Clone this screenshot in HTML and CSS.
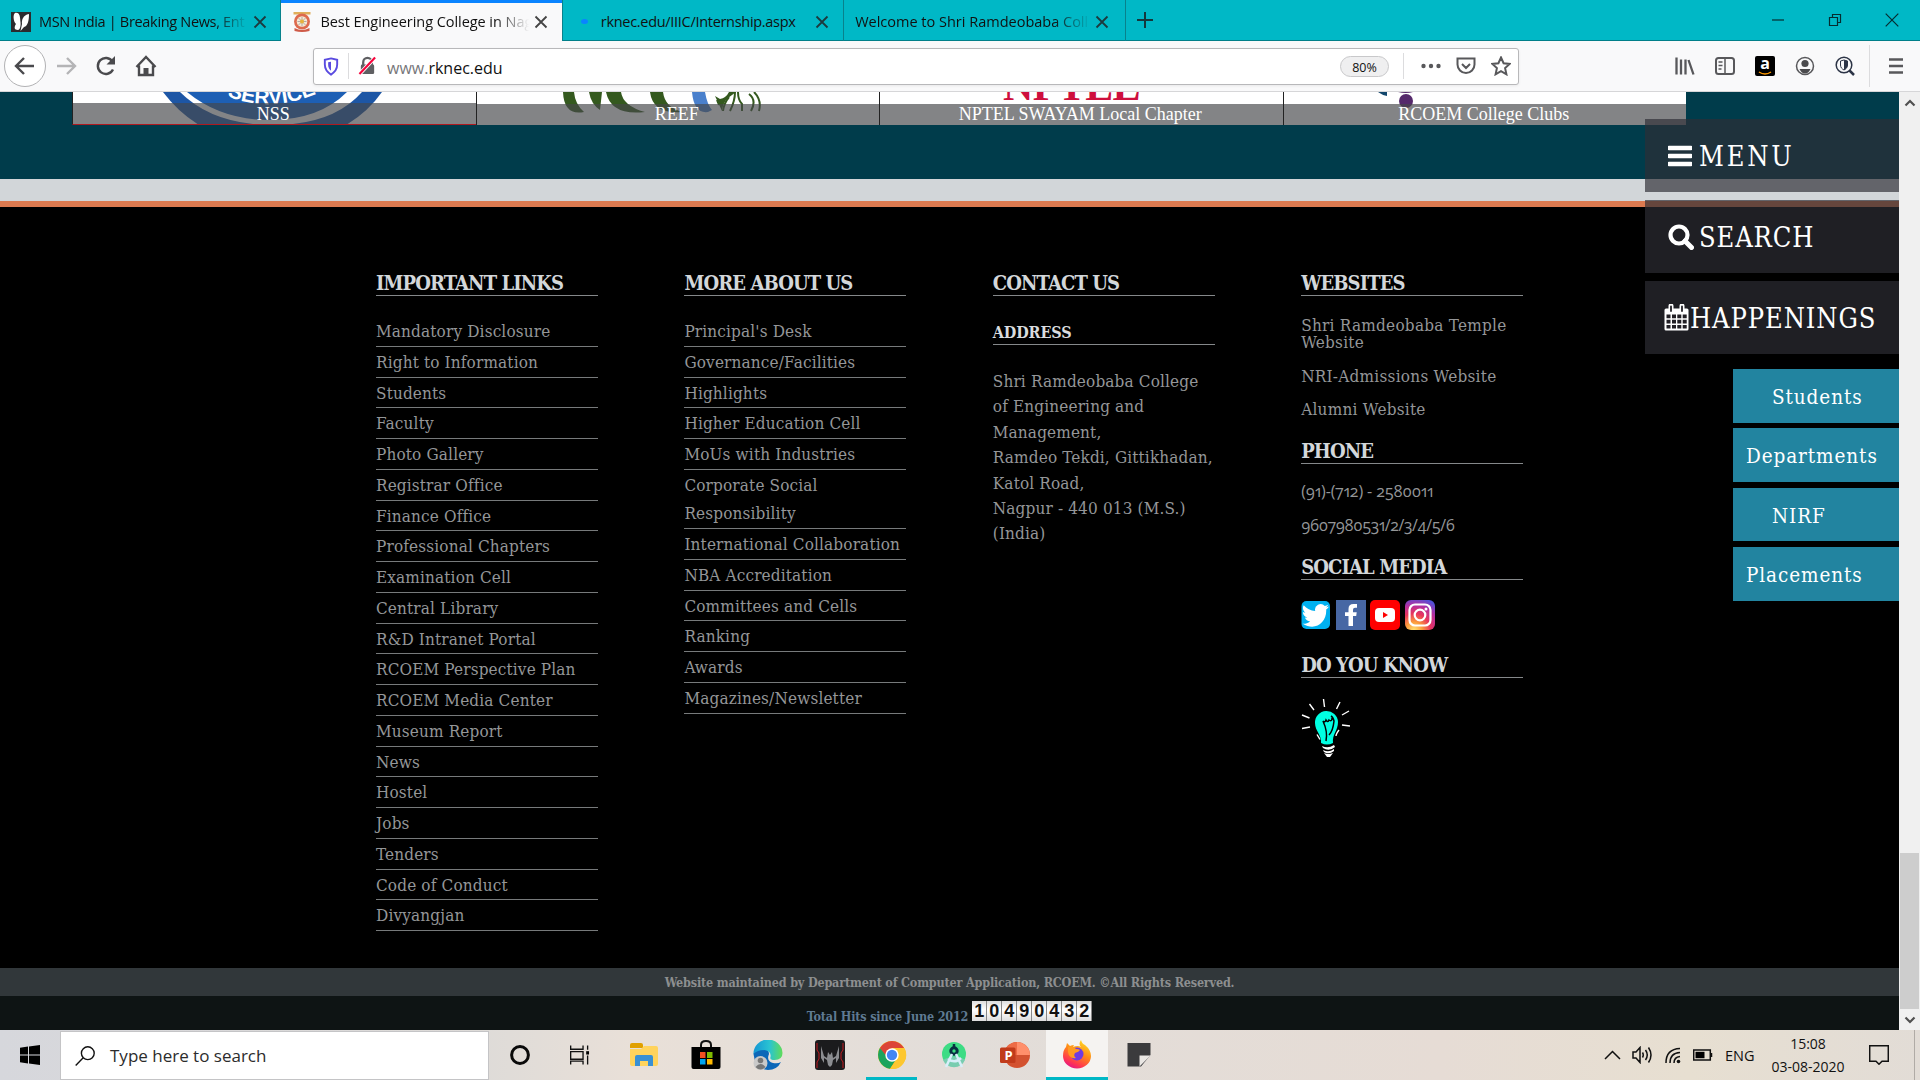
FILE: index.html
```html
<!DOCTYPE html>
<html lang="en">
<head>
<meta charset="utf-8">
<title>Best Engineering College in Nagpur</title>
<link rel="stylesheet" href="styles.css">
</head>
<body>
<div class="screen">
  <header class="tabs">
    <div class="tab">
      <svg class="fav" viewBox="0 0 20 20"><rect width="20" height="20" fill="#2b2b2e"/><path d="M4 1C9 0 9 5 9.500 10 10 14 9 18 7 18 3 18 3 15 5 12 2 9 2 2 4 1Z M18 2C12 3 10.500 8 11 12L9.500 19 13 15C17 14 18 8 18 2Z" fill="#fff"/></svg>
      <span class="tab-text fade t1">MSN India | Breaking News, Ent</span>
      <svg class="x" viewBox="0 0 14 14"><path d="M1.500 1.500l11 11M12.500 1.500l-11 11"/></svg>
    </div>
    <div class="tab active">
      <svg class="fav" viewBox="0 0 20 20"><rect x="1.500" width="17" height="2.500" fill="#e0ae5a"/><circle cx="10" cy="9.500" r="8" fill="#dd6a4e"/><circle cx="10" cy="9.500" r="5.300" fill="#f6e8d2"/><path d="M10 5v9M5.500 9.500h9M6.500 6l7 7M13.500 6l-7 7" stroke="#a9a2a4" stroke-width=".9"/><circle cx="10" cy="9.500" r="2" fill="#e8b23c"/><path d="M2.500 16q7.500 4 15 0v3q-7.500 2-15 0z" fill="#cf5b48"/></svg>
      <span class="tab-text fade t2">Best Engineering College in Nag</span>
      <svg class="x" viewBox="0 0 14 14"><path d="M1.500 1.500l11 11M12.500 1.500l-11 11"/></svg>
    </div>
    <div class="tab">
      <span class="dot"></span>
      <span class="tab-text t3">rknec.edu/IIIC/Internship.aspx</span>
      <svg class="x" viewBox="0 0 14 14"><path d="M1.500 1.500l11 11M12.500 1.500l-11 11"/></svg>
    </div>
    <div class="tab last">
      <span class="tab-text fade t4">Welcome to Shri Ramdeobaba Coll</span>
      <svg class="x" viewBox="0 0 14 14"><path d="M1.500 1.500l11 11M12.500 1.500l-11 11"/></svg>
    </div>
    <svg class="plus" viewBox="0 0 18 18"><path d="M9 1v16M1 9h16"/></svg>
    <div class="winbtns">
      <svg viewBox="0 0 14 14"><path d="M1 7h12"/></svg>
      <svg viewBox="0 0 14 14"><path d="M1.500 4.500h8v8h-8zM4.500 4.500v-3h8v8h-3"/></svg>
      <svg viewBox="0 0 14 14"><path d="M.7 .7l12.600 12.600M13.300 .7L.7 13.300"/></svg>
    </div>
  </header>

  <div class="toolbar">
    <span class="back"><svg class="nav" viewBox="0 0 22 22"><path d="M20 11H2.500M10 3l-8 8 8 8"/></svg></span>
    <svg class="nav dim" viewBox="0 0 22 22"><path d="M2 11h17.500M12 3l8 8-8 8"/></svg>
    <svg class="nav" viewBox="0 0 22 22"><path d="M18 14.500A8 8 0 1 1 17.500 6.500"/><path d="M20 1v8.500h-8.500z" fill="#4a4a4d" stroke="none"/></svg>
    <svg class="nav" viewBox="0 0 22 22"><path d="M1.500 12L11 2l9.500 10M4 10.500V20h14v-9.500"/><path d="M8.500 20v-7h5v7z" fill="#4a4a4d" stroke="none"/></svg>
    <div class="urlbar">
      <svg class="shield" viewBox="0 0 16 20"><path d="M8 1.500L14.500 3v5c0 5-2.500 8-6.500 10.500C4 16 1.500 13 1.500 8V3z" fill="none" stroke="#5a4be0" stroke-width="2"/><path d="M8 5v9.500C6 13 5 11 5 8V5.500z" fill="#5a4be0"/></svg>
      <i class="sep"></i>
      <svg class="lock" viewBox="0 0 20 20"><path d="M5.500 9V6a4.500 4.500 0 0 1 9 0v3" fill="none" stroke="#5f5f62" stroke-width="2.400"/><rect x="3" y="8.500" width="14" height="10" rx="1.500" fill="#5f5f62"/><path d="M1.500 18.500L18 1" stroke="#fff" stroke-width="4"/><path d="M1.500 18.500L18 1" stroke="#f7043c" stroke-width="2.200"/></svg>
      <span class="url"><em>www.</em>rknec.edu</span>
      <span class="zoom">80%</span>
      <i class="sep s2"></i>
      <svg class="ic dots" viewBox="0 0 20 20"><circle cx="2.500" cy="10" r="2.200"/><circle cx="10" cy="10" r="2.200"/><circle cx="17.500" cy="10" r="2.200"/></svg>
      <svg class="ic" viewBox="0 0 20 20"><path d="M1.500 2.500h17v6a8.500 8.500 0 0 1-17 0zM6 8l4 4 4-4"/></svg>
      <svg class="ic" viewBox="0 0 20 20"><path d="M10 1.500l2.600 5.700 6 .7-4.500 4.200 1.300 6.200L10 15.200l-5.400 3.100 1.300-6.200L1.400 7.900l6-.7z"/></svg>
    </div>
    <div class="tools">
      <svg class="ic" viewBox="0 0 20 20"><path d="M1.500 1.500v17M6 3.500v15M10.500 3.500v15M13.500 4l5 14.500" stroke-width="2.300"/></svg>
      <svg class="ic" viewBox="0 0 20 20"><rect x="1" y="2" width="18" height="16" rx="2.500"/><path d="M10 2v16M3.500 6h4M3.500 9.500h4M3.500 13h3" stroke-width="1.500"/></svg>
      <span class="amz">a<svg viewBox="0 0 14 4"><path d="M1 1q6 4 12 0" fill="none" stroke="#f90" stroke-width="1.500"/></svg></span>
      <svg class="ic" viewBox="0 0 20 20"><circle cx="10" cy="10" r="8.500" stroke-width="1.500"/><circle cx="10" cy="7.500" r="3.600" fill="#4a4a4d" stroke="none"/><path d="M4.500 13h11q-2 4.500-5.500 4.500T4.500 13z" fill="#4a4a4d" stroke="none"/></svg>
      <svg class="ic" viewBox="0 0 20 20"><circle cx="9" cy="9" r="7.800" stroke="#2c3446" stroke-width="1.500"/><path d="M5.500 5L9 4l3.500 1v4c0 2.500-1.500 4-3.500 5-2-1-3.500-2.500-3.500-5z" stroke="#2c3446" stroke-width="1"/><path d="M9 4v10c2-1 3.500-2.500 3.500-5V5z" fill="#2c3446" stroke="none"/><path d="M14.500 14.500l4.500 4.500" stroke="#2c3446" stroke-width="2.500"/></svg>
    </div>
    <i class="sep s3"></i>
    <svg class="ic burger" viewBox="0 0 16 20"><path d="M1 3.500h14M1 10h14M1 16.500h14"/></svg>
  </div>

  <div class="view">
    <main class="page">
      <section class="strip">
        <div class="card first">
          <svg class="pic" viewBox="0 0 403 33"><path d="M90 0h219Q295 20 273 33H126Q105 20 90 0z" fill="#1d56a5"/><path d="M107 0h182Q260 33 200 33T107 0z" fill="#fff"/><path d="M114 0h160Q246 28 197 28T114 0z" fill="#1d5fb4"/><path id="arc" d="M154 4Q203 24 258 -5" fill="none"/><text class="seal"><textPath href="#arc">SERVICE</textPath></text></svg>
          <span class="cap">NSS</span>
        </div>
        <div class="card">
          <svg class="pic" viewBox="0 0 403 33"><path d="M86 0h11q1 12 10 20-20 4-21-20zM112 0h13l-2 18Q114 12 112 0zM129 0h15q2 14 24 20-34 4-39-20zM173 0h13q2 16 20 20-30 3-33-20z" fill="#34591e"/><path d="M215 0h13q2 12 7 18l-4 2q-14 2-16-20z" fill="#4a80cc"/><path d="M238 4l5 3q6-1 9-7h7l-8 6q-5 4-6 13" fill="#34591e"/><path d="M240 8l2 5M252 5q-5 6-6 14M258 0q0 9-5 19M261 0q0 8 4 12v7M272 2q8 6 2 17M277 0q8 8 5 19" fill="none" stroke="#34591e" stroke-width="2"/></svg>
          <span class="cap">REEF</span>
        </div>
        <div class="card">
          <span class="nptel">NPTEL</span>
          <span class="cap">NPTEL SWAYAM Local Chapter</span>
        </div>
        <div class="card">
          <svg class="pic" viewBox="0 0 403 33"><path d="M94 0h9v4q-5-1-9-4z" fill="#12466c"/><path d="M114 0h15q-7 2-15 0z" fill="#55296b"/><ellipse cx="122" cy="9" rx="7" ry="7" fill="#55296b"/></svg>
          <span class="cap">RCOEM College Clubs</span>
        </div>
      </section>
      <div class="greybar"></div>

      <footer class="footer">
        <section class="col">
          <h3>IMPORTANT LINKS</h3>
          <ul class="links">
            <li>Mandatory Disclosure</li><li>Right to Information</li><li>Students</li><li>Faculty</li><li>Photo Gallery</li><li>Registrar Office</li><li>Finance Office</li><li>Professional Chapters</li><li>Examination Cell</li><li>Central Library</li><li>R&amp;D Intranet Portal</li><li>RCOEM Perspective Plan</li><li>RCOEM Media Center</li><li>Museum Report</li><li>News</li><li>Hostel</li><li>Jobs</li><li>Tenders</li><li>Code of Conduct</li><li>Divyangjan</li>
          </ul>
        </section>
        <section class="col">
          <h3>MORE ABOUT US</h3>
          <ul class="links">
            <li>Principal's Desk</li><li>Governance/Facilities</li><li>Highlights</li><li>Higher Education Cell</li><li>MoUs with Industries</li><li>Corporate Social<br>Responsibility</li><li>International Collaboration</li><li>NBA Accreditation</li><li>Committees and Cells</li><li>Ranking</li><li>Awards</li><li>Magazines/Newsletter</li>
          </ul>
        </section>
        <section class="col">
          <h3>CONTACT US</h3>
          <h4>ADDRESS</h4>
          <p class="address">Shri Ramdeobaba College<br>of Engineering and<br>Management,<br>Ramdeo Tekdi, Gittikhadan,<br>Katol Road,<br>Nagpur - 440 013 (M.S.)<br>(India)</p>
        </section>
        <section class="col">
          <h3>WEBSITES</h3>
          <div class="sites"><p>Shri Ramdeobaba Temple<br>Website</p><p>NRI-Admissions Website</p><p>Alumni Website</p></div>
          <h3>PHONE</h3>
          <div class="phones"><p class="p1">(91)-(712) - 2580011</p><p class="p2">9607980531/2/3/4/5/6</p></div>
          <h3>SOCIAL MEDIA</h3>
          <div class="social">
            <svg viewBox="0 0 30 30"><rect x=".5" y="1" width="28.500" height="28" rx="5" fill="#00b1f0"/><path d="M28 6.500c-1 .5-2 .8-3 .9 1-.7 1.800-1.600 2.200-2.700-1 .6-2.200 1-3.400 1.200a5.600 5.600 0 0 0-9.600 5.100C9.600 10.800 5.500 8.600 2.700 5.300c-1.500 2.500-.7 5.700 1.700 7.300-.9 0-1.800-.2-2.500-.6 0 2.600 1.800 5 4.500 5.500-.8.200-1.700.2-2.500.1.700 2.200 2.800 3.700 5.200 3.800-2.300 1.800-5.200 2.600-7.500 2.300C14 31.500 26 23 25.200 9.600c1.100-.8 2-1.900 2.800-3.100z" fill="#fff"/></svg>
            <svg viewBox="0 0 30 30"><rect width="30" height="30" fill="#4767a4"/><path d="M12.500 26V16H9v-3.800h3.500V9q0-5 5-5H21v3.800h-2q-2 0-2 2v2.400h3.700L20.200 16H17v10z" fill="#fff"/></svg>
            <svg viewBox="0 0 30 30"><rect width="30" height="30" rx="5" fill="#f00"/><rect x="5" y="8" width="20" height="14" rx="4" fill="#fff"/><path d="M13 12v6l5-3z" fill="#f00"/></svg>
            <svg viewBox="0 0 30 30"><defs><radialGradient id="ig" cx=".3" cy="1" r="1.100"><stop offset="0" stop-color="#ffe070"/><stop offset=".25" stop-color="#fb9a3c"/><stop offset=".5" stop-color="#e8345c"/><stop offset=".75" stop-color="#b52fa0"/><stop offset="1" stop-color="#5151d8"/></radialGradient></defs><rect width="30" height="30" rx="6" fill="url(#ig)"/><g fill="none" stroke="#fff" stroke-width="2.200"><rect x="4.500" y="4.500" width="21" height="21" rx="5.500"/><circle cx="15" cy="15" r="5.300"/></g><circle cx="21" cy="9" r="1.500" fill="#fff"/></svg>
          </div>
          <h3 class="know">DO YOU KNOW</h3>
          <svg class="bulb" viewBox="0 0 50 60"><g stroke="#fff" stroke-width="1.400" fill="none"><path d="M22.500 1l1 8M39 4l-3.500 7M8.500 6l4.500 6M1 17l7.500 3M48 13l-7 4M1 30.500l8-1.500M49 28l-8-1M16 36.500l3 5M38 32q-3 4-3 6"/></g><path d="M20 45c1-8-6-12-6-20a11 11 0 0 1 23-1c0 9-6 12-5 21q-6 3-12 0z" fill="#00ffe2"/><path d="M25 43q2-9-3-20 2 2 3-1 2 3 3 0 3 2 3-2M28 37q4-4 5-14-1-4-3-5" fill="none" stroke="#000" stroke-width="1.500"/><path d="M21 48q6 3 12-1l1 2q-6 5-12 1zM22 52q6 3 11-1v2q-5 4-10 1zM23 55q4 2 9 0l-3 4h-3z" fill="#fff"/></svg>
        </section>
      </footer>
      <div class="credit"><span>Website maintained by Department of Computer Application, RCOEM. ©All Rights Reserved.</span></div>
      <div class="hits"><span>Total Hits since June 2012</span><div class="counter"><b>1</b><b>0</b><b>4</b><b>9</b><b>0</b><b>4</b><b>3</b><b>2</b></div></div>

      <aside class="side">
        <div class="big menu"><svg viewBox="0 0 24 24"><path d="M1 4h22M1 12h22M1 20h22" stroke="#fff" stroke-width="4.500" stroke-linecap="round"/></svg><span>MENU</span></div>
        <div class="big search"><svg viewBox="0 0 26 26"><circle cx="11" cy="11" r="8.500" fill="none" stroke="#fff" stroke-width="4.200"/><path d="M17 17l6.500 6.500" stroke="#fff" stroke-width="5" stroke-linecap="round"/></svg><span>SEARCH</span></div>
        <div class="big happ"><svg viewBox="0 0 25 27"><path d="M2 4.500h21a1.500 1.500 0 0 1 1.500 1.500v19a1.500 1.500 0 0 1-1.500 1.500H2A1.500 1.500 0 0 1 .5 25V6A1.500 1.500 0 0 1 2 4.500z" fill="#fff"/><path d="M2.500 10.500h4v3.800h-4zM8 10.500h4v3.800H8zM13.300 10.500h4v3.800h-4zM18.700 10.500h4v3.800h-4zM2.500 15.700h4v3.800h-4zM8 15.700h4v3.800H8zM13.300 15.700h4v3.800h-4zM18.700 15.700h4v3.800h-4zM2.500 21h4v3.500h-4zM8 21h4v3.500H8zM13.300 21h4v3.500h-4zM18.700 21h4v3.500h-4z" fill="#211f25"/><path d="M7 2v5M18 2v5" stroke="#fff" stroke-width="5" stroke-linecap="round"/><path d="M7 2.500v4.500M18 2.500v4.500" stroke="#211f25" stroke-width="1.800" stroke-linecap="round"/></svg><span>HAPPENINGS</span></div>
        <div class="quick">
          <a class="in">Students</a><a>Departments</a><a class="in">NIRF</a><a>Placements</a>
        </div>
      </aside>
    </main>
    <div class="scroll">
      <svg viewBox="0 0 12 8"><path d="M1.500 6.500L6 2l4.500 4.500"/></svg>
      <div class="thumb"></div>
      <svg viewBox="0 0 12 8"><path d="M1.500 1.500L6 6l4.500-4.500"/></svg>
    </div>
  </div>

  <div class="taskbar">
    <div class="start"><svg viewBox="0 0 20 20"><path d="M0 2.800L8 1.600V9.500H0zM9 1.500L20 0v9.500H9zM0 10.500h8v7.900l-8-1.200zM9 10.500h11V20L9 18.500z"/></svg></div>
    <div class="find"><svg viewBox="0 0 20 20"><circle cx="12.800" cy="7.200" r="6.400"/><path d="M8.200 11.800L.7 19.500"/></svg><span>Type here to search</span></div>
    <div class="apps">
      <div class="app"><svg viewBox="0 0 20 20" class="s20"><circle cx="10" cy="10" r="8.400" fill="none" stroke="#0a0a0a" stroke-width="3"/></svg></div>
      <div class="app tv"><svg viewBox="0 0 21 20" class="s20"><path d="M.7 0v4h13V0M.7 6.500h13v8H.7zM.7 20v-3.500h13V20M18.500 0v4.500M18.500 10.500V20" fill="none" stroke="#111" stroke-width="1.400"/><path d="M17 6h3v3.500h-3z"/></svg></div>
      <div class="app"><svg viewBox="0 0 30 30"><path d="M1 5q0-2 2-2h9q2 0 2 2v3H1z" fill="#e0a000"/><path d="M1 9h11l3-3h12q2 0 2 2v16q0 2-2 2H3q-2 0-2-2z" fill="#ffd35c"/><path d="M6 26V17q0-2 2-2h14q2 0 2 2v9h-5v-5h-8v5z" fill="#3990d4"/></svg></div>
      <div class="app"><svg viewBox="0 0 30 30"><path d="M10 9V5q0-4 5-4t5 4v4" fill="none" stroke="#111" stroke-width="2"/><path d="M.5 7h29v20q0 2-2 2h-25q-2 0-2-2z" fill="#000"/><path d="M9 12h5.500v6H9z" fill="#f25022"/><path d="M16 12h5.500v6H16z" fill="#7fba00"/><path d="M9 19h5.500v5.500H9z" fill="#00a4ef"/><path d="M16 19h5.500v5.500H16z" fill="#ffb900"/></svg></div>
      <div class="app"><svg viewBox="0 0 30 30"><defs><linearGradient id="ed"><stop offset="0" stop-color="#1596d4"/><stop offset=".55" stop-color="#29c3d2"/><stop offset="1" stop-color="#60dc58"/></linearGradient></defs><path d="M.5 14Q2 7 10 8q6 1 6 6-3 7 4 9 5 1 8-1-4 8-13 8Q2 29 .5 14z" fill="#0c67b8"/><path d="M.5 14A14.500 14 0 0 1 29.500 13q0 7-8 7-5 0-4-3 1-6-6-7-7 0-11 4z" fill="url(#ed)"/><circle cx="7.500" cy="23" r="7" fill="#c9c9c9"/><circle cx="7.500" cy="20.500" r="2.800" fill="#777"/><path d="M2.500 27q5-6 10 0-5 5-10 0z" fill="#777"/></svg></div>
      <div class="app"><svg viewBox="0 0 30 30"><rect width="30" height="30" rx="3" fill="#1b1b1d"/><path d="M2 3v7l2 3v6l-2 3v6M28 3v7l-2 3v6l2 3v6" stroke="#c21b20" fill="none"/><path d="M6 6l3 10 3 2 1-6 2 3 2-3 1 6 3-2 3-10v12l-3 5v-5l-3 2-1 5-2 2-2-2-1-5-3-2v5l-3-5z" fill="#8b8d91"/></svg></div>
      <div class="app run"><svg viewBox="0 0 30 30"><circle cx="15" cy="15" r="14" fill="#fbc116"/><path d="M2.900 8A14 14 0 0 1 27.100 8H15L9 18z" fill="#dc4437"/><path d="M2.900 8A14 14 0 0 0 13 28.800L20 18h-9z" fill="#1ca45c"/><path d="M15 8h12.200A14 14 0 0 1 13 28.900L21 17z" fill="#fdc72f"/><circle cx="15" cy="15" r="6.700" fill="#fff"/><circle cx="15" cy="15" r="5.200" fill="#4285f4"/></svg></div>
      <div class="app"><svg viewBox="0 0 30 30"><circle cx="15" cy="14" r="12" fill="#3ddc84"/><path d="M4 20a12 12 0 0 0 22 0q-10-7-22 0z" fill="#78cdb0"/><circle cx="15" cy="11" r="3.200" fill="none" stroke="#073042" stroke-width="3"/><path d="M15 4v4" stroke="#073042" stroke-width="2.500"/><path d="M13 14L7 27M17 14l6 13M9 19q7 5 13-1" stroke="#d7eff9" stroke-width="2.500" fill="none"/></svg></div>
      <div class="app"><svg viewBox="0 0 30 30"><circle cx="17" cy="15" r="13" fill="#d35230"/><path d="M17 2a13 13 0 0 1 13 13H17z" fill="#ff8f6b"/><path d="M17 2a13 13 0 0 0-13 13h13z" fill="#ed6c47"/><rect y="7.500" width="15.500" height="15.500" rx="1.500" fill="#c13b1b"/></svg><span class="pp">P</span></div>
      <div class="app cur"><svg viewBox="0 0 30 30"><defs><linearGradient id="ff" x1=".8" y1="0" x2=".3" y2="1"><stop offset="0" stop-color="#ffe226"/><stop offset=".45" stop-color="#ff8a16"/><stop offset=".8" stop-color="#ff3750"/><stop offset="1" stop-color="#e31587"/></linearGradient></defs><path d="M19 1q1 4 4 5 6 5 6 11a14 12.500 0 0 1-28 0q0-6 3-9l1-4 3 3q2-1 4-1l-1 2q5-2 8 0-3-3 0-7z" fill="url(#ff)"/><circle cx="15" cy="15" r="6.500" fill="#6f3be0"/><path d="M6 8q5-2 8 2 3 0 4 1-1 2-5 3-2 3 1 5-7 1-8-6z" fill="#ff9a22"/></svg></div>
      <div class="app"><svg viewBox="0 0 30 30"><path d="M3.500 3h23v12L17 26.500H3.500z" fill="#3b3b3d"/><path d="M26.500 15.500L15.500 26.500v-11z" fill="#e9e6e3"/></svg></div>
    </div>
    <div class="tray">
      <svg class="chev" viewBox="0 0 17 10"><path d="M1 9l7.500-7.500L16 9"/></svg>
      <svg class="spk" viewBox="0 0 21 18"><path d="M1 6h3l4-4.500v15L4 12H1zM10.500 6.500q1.500 2.500 0 5M13.500 4q3.500 5 0 10M16.500 1.500q5 7.500 0 15"/></svg>
      <svg class="wifi" viewBox="0 0 16 17"><path d="M1 16Q1 2 15 1.500M5 16Q5 6 15 5.500M9 16q0-6 6-6.500"/><circle cx="13.500" cy="14.500" r="1.800" fill="#111" stroke="none"/></svg>
      <svg class="bat" viewBox="0 0 20 12"><path d="M.7 1h16.600v10H.7zM18.500 4v4"/><path d="M2.500 2.800h9v6.400h-9z" fill="#000" stroke="none"/></svg>
      <span class="eng">ENG</span>
      <div class="clock"><span class="time">15:08</span><span>03-08-2020</span></div>
      <svg class="note" viewBox="0 0 20 20"><path d="M.7 .7h18.600v15.500H13l-3 3-3-3H.7z"/></svg>
      <i class="desk"></i>
    </div>
  </div>
</div>
</body>
</html>
```
FILE: styles.css
```css
* { box-sizing: border-box; }
body { margin: 0; font-family: "Open Sans", "Noto Sans", sans-serif; color: #111; }
svg { display: block; flex: none; }
h3, h4, p, ul { margin: 0; padding: 0; list-style: none; }
.screen { width: 1920px; height: 1080px; display: flex; flex-direction: column; overflow: hidden; background: #000; }

/* browser tabs */
.tabs { height: 41px; flex: none; display: flex; background: #00b8c6; box-shadow: inset 0 -1px #007f89; }
.tab { width: 281.400px; padding: 2px 0 0 11px; display: flex; align-items: center; border-right: 1px solid #08828c; font-size: 14.500px; }
.tab.active { background: #f9f9fa; box-shadow: inset 0 3px #0a84ff; }
.fav { width: 20px; height: 20px; margin-right: 8px; }
.tab-text { width: 209px; white-space: nowrap; overflow: hidden; line-height: 24px; }
.fade { -webkit-mask-image: linear-gradient(90deg, #000 84%, transparent 100%); mask-image: linear-gradient(90deg, #000 84%, transparent 100%); }
.t1 { letter-spacing: -.32px; }
.t2 { letter-spacing: -.05px; }
.t3 { letter-spacing: -.3px; }
.t4 { width: 236px; }
.x { width: 14px; height: 14px; margin-left: 5px; stroke: #1c3a3e; stroke-width: 1.800; }
.t4 + .x { margin-left: 4px; }
.active .x { stroke: #444; }
.dot { width: 7px; height: 5px; border-radius: 50%; background: #0a84ff; margin: 0 13px 0 7px; }
.plus { width: 18px; height: 18px; margin: 11px 0 0 10px; stroke: #15383c; stroke-width: 2; }
.winbtns { margin: 13px 21px 0 auto; display: flex; gap: 43px; }
.winbtns svg { width: 14px; height: 14px; fill: none; stroke: #062c30; stroke-width: 1.200; }

/* navigation toolbar */
.toolbar { height: 51px; flex: none; background: #f9f9fa; border-bottom: 1px solid #d6d6d8; display: flex; align-items: center; padding-left: 4px; }
.back { width: 42px; height: 42px; border: 1px solid #b2b2b4; border-radius: 50%; background: #fff; display: grid; place-items: center; margin-right: 9px; }
.nav { width: 22px; height: 22px; fill: none; stroke: #4a4a4d; stroke-width: 2.400; margin-right: 18px; }
.back .nav { margin: 0; }
.nav.dim { stroke: #b4b4b6; }
.urlbar { width: 1206px; height: 37px; margin-left: 138px; background: #fff; border: 1px solid #b8b8ba; border-radius: 3px; display: flex; align-items: center; padding-left: 9px; box-shadow: 0 1px 3px #0001; }
.shield { width: 16px; height: 19px; }
.sep { width: 1px; height: 26px; background: #dcdcde; margin: 0 9px 0 9px; }
.lock { width: 19px; height: 20px; }
.url { margin: 3px auto 0 10px; font-size: 16px; }
.url em { font-style: normal; color: #77777a; }
.zoom { width: 49px; height: 21px; background: #efeff0; border: 1px solid #c8c8ca; border-radius: 11px; font-size: 12.500px; line-height: 21px; text-align: center; }
.s2 { margin: 0 17px 0 14px; }
.ic { width: 20px; height: 20px; fill: none; stroke: #58585b; stroke-width: 2; }
.urlbar .ic { margin-right: 15px; }
.urlbar .ic:last-child { margin-right: 7px; }
.ic.dots { fill: #58585b; stroke: none; }
.tools { display: flex; gap: 20px; margin-left: 156px; }
.amz { width: 20px; height: 20px; background: #000; border-radius: 2px; color: #fff; font-weight: 700; font-size: 16px; line-height: 14px; text-align: center; }
.amz svg { width: 14px; height: 4px; margin: 1px 3px; }
.s3 { height: 42px; margin: 0 18px 0 14px; }
.burger { width: 16px; stroke-width: 2.400; }

/* page viewport */
.view { height: 938px; flex: none; display: flex; }
.page { width: 1899px; position: relative; background: #000; }
.scroll { width: 21px; background: #f0f0f0; display: flex; flex-direction: column; align-items: center; padding: 7px 1px 6px; }
.scroll svg { width: 12px; height: 8px; fill: none; stroke: #505050; stroke-width: 2.200; }
.thumb { width: 19px; height: 156px; background: #cdcdcd; margin: auto 0 7px; }

.strip { height: 87px; background: #003c4b; padding-left: 72px; display: flex; }
.card { width: 403.500px; height: 33px; background: #fff; position: relative; overflow: hidden; border-left: 1px solid #222; }
.card.first { border-bottom: 1px solid #b0191f; }
.pic { width: 403px; height: 33px; }
.cap { position: absolute; left: 0; right: 2px; bottom: 0; height: 21px; background: rgba(70, 72, 74, .67); box-shadow: 2px 0 rgba(70, 72, 74, .67); color: #fff; font: 18px/21px "Liberation Serif", serif; text-align: center; }
.first .cap { height: 21px; bottom: 0; line-height: 22px; }
.seal { font: bold 21px "Liberation Sans", sans-serif; fill: #fff; }
.nptel { position: absolute; left: 123px; top: -28px; font: bold 42px/44px "Liberation Serif", serif; letter-spacing: -.6px; color: #ce0f3d; }
.greybar { height: 28px; background: #d2d6d9; border-bottom: 6px solid #dc7a50; }

/* footer columns */
.footer, .credit, .hits, .side { font-family: "DejaVu Serif Condensed", "DejaVu Serif", serif; font-stretch: condensed; }
.footer { height: 761px; padding: 65px 0 0 376px; display: grid; grid-template-columns: repeat(4, 222px); column-gap: 86.400px; color: #949698; font-size: 17px; letter-spacing: .15px; }
.col h3 { height: 24px; line-height: 23px; border-bottom: 1px solid #85888a; color: #d3d7da; font-size: 20px; font-weight: 700; letter-spacing: -.9px; white-space: nowrap; }
.col h4 { height: 24px; margin-top: 25px; line-height: 24px; border-bottom: 1px solid #85888a; color: #d9dcdf; font-size: 16px; letter-spacing: -.1px; }
.links { padding-top: 20px; }
.links li { height: 30.760px; line-height: 28px; padding-top: 1px; border-bottom: 1px solid #777a7b; white-space: nowrap; }
.links li:has(br) { height: 59.300px; }
.address { margin-top: 24px; line-height: 25.400px; white-space: nowrap; }
.sites { padding-top: 21px; height: 144px; white-space: nowrap; letter-spacing: .25px; }
.sites p { line-height: 17px; margin-bottom: 16.500px; }
.phones { height: 92px; padding-top: 10px; font: 16px/34px "Open Sans", sans-serif; font-variant-numeric: oldstyle-nums proportional-nums; }
.p1 { letter-spacing: -.1px; }
.p2 { letter-spacing: -.4px; }
.social { display: flex; gap: 4.500px; padding-top: 20px; height: 74px; }
.social svg { width: 30px; height: 30px; }
.bulb { width: 50px; height: 60px; margin-top: 20px; }
.credit { height: 28px; background: #31373a; color: #8d8f90; font-size: 12.500px; letter-spacing: -.185px; font-weight: 700; line-height: 29px; text-align: center; }
.hits { height: 34px; background: #0e1414; color: #5f7a92; font-size: 12.500px; letter-spacing: -.18px; font-weight: 700; display: flex; justify-content: center; gap: 4px; line-height: 42px; }
.counter { display: flex; height: 20px; margin-top: 5px; }
.counter b { width: 15px; background: linear-gradient(#ddd, #fff 45%, #ddd); border-right: 1px solid #888; color: #111; font: bold 18px/21px "Liberation Sans", sans-serif; text-align: center; }

/* floating menu over the page */
.side { position: absolute; top: 27px; right: 0; width: 254px; display: flex; flex-direction: column; gap: 8px; color: #fff; }
.big { height: 73px; background: rgba(46, 45, 53, .68); display: flex; align-items: center; font-size: 27px; line-height: 32px; letter-spacing: .9px; white-space: nowrap; }
.big span { padding-top: 2px; }
.big svg { width: 24px; height: 24px; margin-left: 23px; }
.menu span { margin-left: 7px; letter-spacing: 2.800px; }
.search svg { width: 26px; height: 26px; }
.search span { margin-left: 5px; }
.happ svg { width: 25px; height: 27px; margin-left: 19px; }
.happ span { margin-left: 1px; }
.quick { width: 166px; margin: 7px 0 0 auto; display: grid; gap: 5.500px; grid-auto-rows: 53.800px; }
.quick a { background: #2284a0; padding-left: 13px; font-size: 20.500px; letter-spacing: .9px; line-height: 56px; white-space: nowrap; }
.quick .in { padding-left: 39px; }

/* taskbar */
.taskbar { height: 50px; flex: none; display: flex; background: linear-gradient(90deg, #d6d7dc, #dedbd8 25%, #e9e0d8 33%, #e2ddd9 50%, #e6dcd5 75%, #e7dfd1 88%, #e2dcd6); }
.start { width: 60px; padding: 15px 0 0 20px; }
.start svg { width: 20px; height: 20px; }
.find { width: 429px; height: 49px; background: #fff; border: 1px solid #c4c4c6; display: flex; align-items: center; padding-left: 14px; margin-top: 1px; font-size: 17px; color: #2c2c2c; }
.find svg { width: 20px; height: 20px; fill: none; stroke: #111; stroke-width: 1.400; margin-right: 15px; }
.apps { display: flex; }
.app { width: 61.950px; height: 50px; display: grid; place-items: center; position: relative; }
.app svg { width: 30px; height: 30px; }
.app svg.s20 { width: 20px; height: 20px; }
.tv { padding-right: 4px; }
.run { background: linear-gradient(#00b8c6, #00b8c6) center bottom / 51px 3px no-repeat; }
.cur { background: #f5f3f1; border-bottom: 3px solid #00b8c6; }
.pp { position: absolute; left: 20px; top: 17px; font: bold 13px/16px "Open Sans", sans-serif; color: #fff; }
.tray { margin-left: auto; display: flex; align-items: center; font-size: 15px; }
.tray svg { fill: none; stroke: #111; stroke-width: 1.500; }
.chev { width: 17px; height: 10px; margin-right: 11px; }
.spk { width: 21px; height: 18px; margin-right: 12px; }
.wifi { width: 16px; height: 17px; margin-right: 12px; }
.bat { width: 20px; height: 12px; margin-right: 12px; }
.eng { width: 44px; font-size: 14.500px; }
.clock { width: 78px; display: flex; flex-direction: column; text-align: center; font-size: 14px; line-height: 23px; margin-right: 22px; }
.note { width: 20px; height: 20px; margin-right: 25px; }
.desk { width: 6px; height: 50px; border-left: 1px solid #b0aba6; }
```
